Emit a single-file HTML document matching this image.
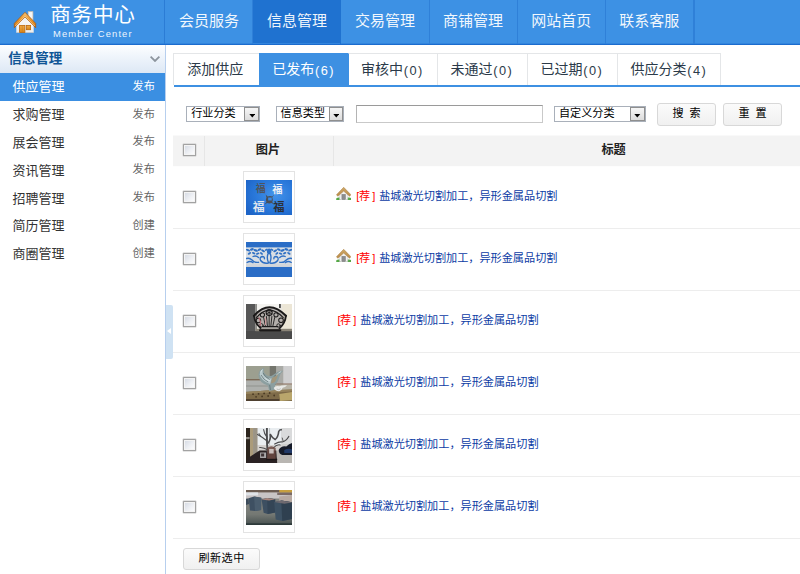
<!DOCTYPE html>
<html lang="zh-CN"><head><meta charset="utf-8"><title>商务中心 Member Center</title>
<style>
*{margin:0;padding:0;box-sizing:border-box}
html,body{width:800px;height:574px;overflow:hidden;background:#fff;font-family:"Liberation Sans","Noto Sans CJK SC",sans-serif}
i{font-style:normal;display:block}
a{display:block;text-decoration:none;color:inherit}
.cj{position:absolute;display:block;overflow:visible;white-space:nowrap;line-height:1.1;font-family:"Liberation Sans","Noto Sans CJK SC",sans-serif}
.cj .t{color:inherit;font-size:inherit;position:relative;top:-.1em}
.cj.b{font-weight:bold}
.la{position:absolute;display:block;white-space:nowrap;line-height:1.25}
#hd{position:absolute;left:0;top:0;width:800px;height:45.1px;background:linear-gradient(#3d91e4 0,#3d91e4 43.3px,#1c6dcf 43.9px,#1a6acd 100%)}
#hd .logo{position:absolute;left:0;top:0;width:165.4px;height:43.7px;border-right:1px solid #2b7cd5}
#hd .home{position:absolute;left:13.2px;top:9.8px}
#hd nav a{position:absolute;top:0;height:43.5px;border-right:1px solid #2f80d8;color:#fff}
#hd nav a.on{background:linear-gradient(#1f72d0 0,#1f72d0 43px,rgba(31,114,208,0) 43.5px);border-right-color:#1f72d0}
#hd nav .cj{opacity:.93}
#hd nav .sep{position:absolute;top:0;width:1px;height:43.7px;background:#2f80d8}
#sd{position:absolute;left:0;top:45.2px;width:165.4px;height:529px;background:#fff}
#sd:after{content:"";position:absolute;left:165px;top:0;width:1.1px;height:529px;background:#b7cfee}
#sd .sh{position:absolute;left:0;top:0;width:165px;height:27.6px;background:linear-gradient(#fdfeff 0%,#f1f6fc 35%,#dde8f5 100%)}
#sd .chev{position:absolute;left:150px;top:11.2px}
#sd .si{position:absolute;left:0;width:165px;height:27.8px}
#sd .si.on{background:#3b8fe2}
#hdl{position:absolute;left:166.1px;top:304.7px;width:7px;height:54px;background:#cfe2f3;border-radius:0 2px 2px 0}
#hdl i{position:absolute;left:1.2px;top:23.500px;width:0;height:0;border:3.600px solid transparent;border-left:0;border-right:4px solid #fff}
#mn{position:absolute;left:0;top:0;width:800px;height:574px}
#mn .tabs{position:absolute;left:0;top:53px;width:800px;height:32px}
#mn .tab{position:absolute;top:0;height:32px;border-top:1px solid #e4e6e8;border-left:1px solid #e4e6e8;color:#2b3a49}
#mn .tab:last-child{border-right:1px solid #e4e6e8}
#mn .tab.on{background:#3d90e2;border-color:#3d90e2}
#mn .tab.on + .tab{border-left-color:#3d90e2}
#mn .tabline{position:absolute;left:173.75px;top:84.6px;width:626.25px;height:2px;background:#3d90e2}
.sel{position:absolute;top:105.6px;height:16.2px;border:1px solid #a9b0ba;background:#fff;display:block}
.sel .btn{position:absolute;right:0;top:0;bottom:0;width:14.6px;border:1px solid #8f8f8f;background:linear-gradient(#f6f6f6,#dcdcdc)}
.sel .btn svg{position:absolute;left:3.2px;top:6.800px}
.inp{position:absolute;top:105.2px;height:17.4px;border:1px solid #c9c9c9;border-top-color:#9a9a9a;border-left-color:#b4b4b4;background:#fff;display:block}
.bt{position:absolute;display:block;border:1px solid #d8d8d8;border-radius:3px;background:linear-gradient(#fbfbfb,#f0f0f0)}
.th{position:absolute;left:173.4px;top:135px;width:626.6px;height:32px;background:linear-gradient(rgba(243,243,243,0) 0,#f3f3f3 1px,#f3f3f3 31px,rgba(243,243,243,0) 31.6px)}
.th .vs{position:absolute;top:1px;width:1px;height:30px;background:#e6e6e6}
.cb{position:absolute;width:12.6px;height:12.6px;border:1px solid #a2a2a2;border-radius:.5px;background:linear-gradient(135deg,#d2d8e2,#eef0f4 55%,#fff);box-shadow:inset 0 0 0 1px #f4f4f4,0 0 0 .4px #c9c9c9}
.tr{position:absolute;left:173.4px;width:626.6px;height:62.5px;border-bottom:1px solid #ededed}
.tr .pic{position:absolute;left:69.9px;top:5.0px;width:51.6px;height:51.3px;border:1px solid #e3e3e3;background:#fff;display:block}
.tr .pic svg{position:absolute;left:1.6px;top:7.3px;display:block}
.tr .hs{position:absolute;left:162.6px;top:20.4px}
</style></head>
<body>
<header id="hd">
<div class="logo">
<svg class="home" viewBox="0 0 24 24" width="24" height="24">
<defs><linearGradient id="rf" x1="0" y1="0" x2="0" y2="1"><stop offset="0" stop-color="#fac577"/><stop offset=".45" stop-color="#ee9a2e"/><stop offset="1" stop-color="#cf7410"/></linearGradient>
<linearGradient id="dr" x1="0" y1="0" x2="0" y2="1"><stop offset="0" stop-color="#f2ad48"/><stop offset="1" stop-color="#d88518"/></linearGradient>
<linearGradient id="wl" x1="0" y1="0" x2="0" y2="1"><stop offset="0" stop-color="#e4e4e4"/><stop offset=".4" stop-color="#f6f6f6"/><stop offset="1" stop-color="#ededed"/></linearGradient></defs>
<rect x="15.2" y="1.7" width="4.7" height="9" fill="#f6f6f6" stroke="#d9c3a6" stroke-width=".7"/>
<path d="M3.300 12.500 L12 4.400 L20.700 12.500 L20.700 22.500 L3.300 22.500Z" fill="url(#wl)"/>
<path d="M3.300 22.500H20.700" stroke="#c9c9c9" stroke-width=".8"/>
<rect x="6.600" y="15.400" width="5.300" height="7.100" fill="url(#dr)" stroke="#b9680f" stroke-width=".8"/>
<path d="M9.250 15.800V22.200" stroke="#c9781c" stroke-width=".5"/>
<rect x="13.300" y="15.400" width="4.300" height="4.300" fill="url(#dr)" stroke="#b9680f" stroke-width=".8"/>
<path d="M1.300 13.400 L12 2.300 L22.700 13.400 L22.700 17.700 L12 6.900 L1.300 17.700Z" fill="url(#rf)" stroke="#a9590f" stroke-width=".8" stroke-linejoin="round"/>
<path d="M2.300 16 L12 6.200 L21.700 16" fill="none" stroke="#fbdcaa" stroke-width=".7"/>
</svg>
<span class="cj" style="left:50.3px;top:5.8px;width:85.2px;height:22.66px;color:#fff;font-size:20.6px;letter-spacing:.7px"><span class="t">商务中心</span></span>
<span class="la" style="left:53px;top:27.8px;font-size:9.4px;color:#eef5fd;letter-spacing:1.12px;">Member Center</span>
</div>
<nav>
<a style="left:165.4px;width:88.04px"><span class="cj" style="left:13.6px;top:14.3px;width:60px;height:16.5px;font-size:15px"><span class="t">会员服务</span></span></a>
<a class="on" style="left:253.44px;width:88.04px"><span class="cj" style="left:13.6px;top:14.3px;width:60px;height:16.5px;font-size:15px"><span class="t">信息管理</span></span></a>
<a style="left:341.48px;width:88.04px"><span class="cj" style="left:13.6px;top:14.3px;width:60px;height:16.5px;font-size:15px"><span class="t">交易管理</span></span></a>
<a style="left:429.52px;width:88.04px"><span class="cj" style="left:13.6px;top:14.3px;width:60px;height:16.5px;font-size:15px"><span class="t">商铺管理</span></span></a>
<a style="left:517.56px;width:88.04px"><span class="cj" style="left:13.6px;top:14.3px;width:60px;height:16.5px;font-size:15px"><span class="t">网站首页</span></span></a>
<a style="left:605.6px;width:88.04px"><span class="cj" style="left:13.6px;top:14.3px;width:60px;height:16.5px;font-size:15px"><span class="t">联系客服</span></span></a>
<i class="sep" style="left:693.64px"></i>
</nav>
</header>
<aside id="sd">
<div class="sh"><span class="cj b" style="left:8.2px;top:8px;width:54.8px;height:14.85px;color:#0f5596;font-size:13.5px"><span class="t">信息管理</span></span><svg class="chev" viewBox="0 0 10 6" width="10" height="6"><path d="M.6 .7 L5 5 L9.4 .7" fill="none" stroke="#8c949d" stroke-width="1.8"/></svg></div>
<div class="si on" style="top:27.6px"><span class="cj" style="left:12.6px;top:8.7px;width:52px;height:14.3px;color:#fff;font-size:13px"><span class="t">供应管理</span></span><span class="cj" style="left:132.6px;top:8.05px;width:22.2px;height:13.31px;color:#fff;font-size:11.1px"><span class="t">发布</span></span></div>
<div class="si" style="top:55.45px"><span class="cj" style="left:12.6px;top:8.7px;width:52px;height:14.3px;color:#333;font-size:13px"><span class="t">求购管理</span></span><span class="cj" style="left:132.6px;top:8.05px;width:22.2px;height:13.31px;color:#666;font-size:11.1px"><span class="t">发布</span></span></div>
<div class="si" style="top:83.3px"><span class="cj" style="left:12.6px;top:8.7px;width:52px;height:14.3px;color:#333;font-size:13px"><span class="t">展会管理</span></span><span class="cj" style="left:132.6px;top:8.05px;width:22.2px;height:13.31px;color:#666;font-size:11.1px"><span class="t">发布</span></span></div>
<div class="si" style="top:111.15px"><span class="cj" style="left:12.6px;top:8.7px;width:52px;height:14.3px;color:#333;font-size:13px"><span class="t">资讯管理</span></span><span class="cj" style="left:132.6px;top:8.05px;width:22.2px;height:13.31px;color:#666;font-size:11.1px"><span class="t">发布</span></span></div>
<div class="si" style="top:139px"><span class="cj" style="left:12.6px;top:8.7px;width:52px;height:14.3px;color:#333;font-size:13px"><span class="t">招聘管理</span></span><span class="cj" style="left:132.6px;top:8.05px;width:22.2px;height:13.31px;color:#666;font-size:11.1px"><span class="t">发布</span></span></div>
<div class="si" style="top:166.85px"><span class="cj" style="left:12.6px;top:8.7px;width:52px;height:14.3px;color:#333;font-size:13px"><span class="t">简历管理</span></span><span class="cj" style="left:132.6px;top:8.05px;width:22.2px;height:13.31px;color:#666;font-size:11.1px"><span class="t">创建</span></span></div>
<div class="si" style="top:194.7px"><span class="cj" style="left:12.6px;top:8.7px;width:52px;height:14.3px;color:#333;font-size:13px"><span class="t">商圈管理</span></span><span class="cj" style="left:132.6px;top:8.05px;width:22.2px;height:13.31px;color:#666;font-size:11.1px"><span class="t">创建</span></span></div>
</aside>
<div id="hdl"><i></i></div>
<main id="mn">
<div class="tabs">
<a class="tab" style="left:173px;width:85.75px"><span class="cj" style="left:13.35px;top:9.2px;width:56px;height:15.4px;color:#2b3a49;font-size:14px"><span class="t">添加供应</span></span></a>
<a class="tab on" style="left:258.75px;width:88.75px"><span class="cj" style="left:12.6px;top:9.2px;width:42px;height:15.4px;color:#fff;font-size:14px"><span class="t">已发布</span></span><span class="la" style="left:55.3px;top:8.9px;font-size:12.8px;color:#fff;letter-spacing:1.35px;">(6)</span></a>
<a class="tab" style="left:347.5px;width:89.5px"><span class="cj" style="left:12.6px;top:9.2px;width:42px;height:15.4px;color:#2b3a49;font-size:14px"><span class="t">审核中</span></span><span class="la" style="left:55.3px;top:8.9px;font-size:12.8px;color:#2b3a49;letter-spacing:1.35px;">(0)</span></a>
<a class="tab" style="left:437px;width:90px"><span class="cj" style="left:12.6px;top:9.2px;width:42px;height:15.4px;color:#2b3a49;font-size:14px"><span class="t">未通过</span></span><span class="la" style="left:55.3px;top:8.9px;font-size:12.8px;color:#2b3a49;letter-spacing:1.35px;">(0)</span></a>
<a class="tab" style="left:527px;width:90px"><span class="cj" style="left:12.6px;top:9.2px;width:42px;height:15.4px;color:#2b3a49;font-size:14px"><span class="t">已过期</span></span><span class="la" style="left:55.3px;top:8.9px;font-size:12.8px;color:#2b3a49;letter-spacing:1.35px;">(0)</span></a>
<a class="tab" style="left:617px;width:103.5px"><span class="cj" style="left:12.6px;top:9.2px;width:56px;height:15.4px;color:#2b3a49;font-size:14px"><span class="t">供应分类</span></span><span class="la" style="left:69.3px;top:8.9px;font-size:12.8px;color:#2b3a49;letter-spacing:1.35px;">(4)</span></a>
</div>
<div class="tabline"></div>
<div class="flt">
<span class="sel" style="left:186.2px;width:73.9px"><span class="cj" style="left:4px;top:1.55px;width:44.4px;height:13.31px;color:#000;font-size:11.1px"><span class="t">行业分类</span></span><i class="btn"><svg viewBox="0 0 7 4" width="6.6" height="3.4"><path d="M0 0H7L3.5 4Z" fill="#000"/></svg></i></span>
<span class="sel" style="left:275.6px;width:68.6px"><span class="cj" style="left:4px;top:1.55px;width:44.4px;height:13.31px;color:#000;font-size:11.1px"><span class="t">信息类型</span></span><i class="btn"><svg viewBox="0 0 7 4" width="6.6" height="3.4"><path d="M0 0H7L3.5 4Z" fill="#000"/></svg></i></span>
<span class="inp" style="left:356px;width:186.5px"></span>
<span class="sel" style="left:554px;width:91.5px"><span class="cj" style="left:4px;top:1.55px;width:55.5px;height:13.31px;color:#000;font-size:11.1px"><span class="t">自定义分类</span></span><i class="btn"><svg viewBox="0 0 7 4" width="6.6" height="3.4"><path d="M0 0H7L3.5 4Z" fill="#000"/></svg></i></span>
<span class="bt" style="left:657.2px;top:103px;width:58.6px;height:22.5px"><span class="cj" style="left:14.2px;top:4.15px;width:11.1px;height:13.31px;color:#000;font-size:11.1px"><span class="t">搜</span></span><span class="cj" style="left:31.4px;top:4.15px;width:11.1px;height:13.31px;color:#000;font-size:11.1px"><span class="t">索</span></span></span>
<span class="bt" style="left:723.2px;top:103px;width:58.6px;height:22.5px"><span class="cj" style="left:14.2px;top:4.15px;width:11.1px;height:13.31px;color:#000;font-size:11.1px"><span class="t">重</span></span><span class="cj" style="left:31.4px;top:4.15px;width:11.1px;height:13.31px;color:#000;font-size:11.1px"><span class="t">置</span></span></span>
</div>
<div class="th"><i class="cb" style="left:9.8px;top:8.8px"></i><i class="vs" style="left:31px"></i><i class="vs" style="left:159.8px"></i><span class="cj b" style="left:82.4px;top:10.5px;width:24.8px;height:13.42px;color:#222;font-size:12.2px"><span class="t">图片</span></span><span class="cj b" style="left:428px;top:10.5px;width:24.8px;height:13.42px;color:#222;font-size:12.2px"><span class="t">标题</span></span></div>
<div class="tr" style="top:166.3px">
<i class="cb" style="left:9.8px;top:24.4px"></i>
<span class="pic"><svg viewBox="0 0 46 35" width="46.3" height="35" preserveAspectRatio="none">
<defs><radialGradient id="t1g" cx=".62" cy=".42" r=".75"><stop offset="0" stop-color="#4493ea"/><stop offset=".55" stop-color="#2a79db"/><stop offset="1" stop-color="#1d64c7"/></radialGradient></defs>
<rect width="46" height="35" fill="url(#t1g)"/>
<text x="9.8" y="11.8" font-size="9.8" font-weight="bold" font-family="&quot;Liberation Sans&quot;,&quot;Noto Sans CJK SC&quot;,sans-serif" fill="#4e5560">福</text>
<text x="26.2" y="12.6" font-size="10.2" font-weight="bold" font-family="&quot;Liberation Sans&quot;,&quot;Noto Sans CJK SC&quot;,sans-serif" fill="#e9eef5">福</text>
<text x="6.6" y="31.2" font-size="11.8" font-weight="bold" font-family="&quot;Liberation Sans&quot;,&quot;Noto Sans CJK SC&quot;,sans-serif" fill="#dfe6ee">福</text>
<text x="27" y="30.6" font-size="11.2" font-weight="bold" font-family="&quot;Liberation Sans&quot;,&quot;Noto Sans CJK SC&quot;,sans-serif" fill="#2c3038">福</text>
<path d="M19.5 14.5 l2 2 l2.3 -.6 l2.3 .6 l2 -2 l-2 3 l.6 2.3 l-.6 2.3 l2 2.6 l-2.6 -1.8 l-2.3 .6 l-2.3 -.6 l-2.6 1.8 l2 -2.6 l-.6 -2.3 l.6 -2.3 z M22 17.6 v3 h3.6 v-3z" fill="#4a4f58" fill-rule="evenodd"/>
</svg></span>
<svg class="hs" viewBox="0 0 16 14" width="15.4" height="13.3">
<defs><linearGradient id="hr0" x1="0" y1="0" x2="0" y2="1"><stop offset="0" stop-color="#cfa968"/><stop offset="1" stop-color="#b98a48"/></linearGradient></defs>
<path d="M0 12.600 Q0 11 2.400 11 H5 V13.800 H1 Q0 13.800 0 12.600Z M16 12.600 Q16 11 13.600 11 H11 V13.800 H15 Q16 13.800 16 12.600Z" fill="#55a846"/>
<path d="M3.700 7 L8 2.500 L12.300 7 V13.300 H3.700Z" fill="#f2f2f2" stroke="#bdbdbd" stroke-width=".5"/>
<rect x="6.100" y="7.700" width="3.800" height="5.600" fill="#8d8d8d" stroke="#6f6f6f" stroke-width=".4"/>
<path d="M.4 8.1 L8 .3 L15.6 8.1 L14.2 9.8 L8 4.300 L1.8 9.8Z" fill="url(#hr0)" stroke="#a67a3c" stroke-width=".5" stroke-linejoin="round"/>
</svg>
<span class="la" style="left:182.9px;top:23.9px;font-size:11.1px;color:#f00;">[</span><span class="cj" style="left:185.6px;top:25.05px;width:11.1px;height:13.31px;color:#f00;font-size:11.1px"><span class="t">荐</span></span><span class="la" style="left:198.8px;top:23.9px;font-size:11.1px;color:#f00;">]</span>
<span class="cj" style="left:205.8px;top:25.05px;width:178.4px;height:13.37px;color:#0b3ba4;font-size:11.15px"><span class="t">盐城激光切割加工，异形金属品切割</span></span>
</div>
<div class="tr" style="top:228.3px">
<i class="cb" style="left:9.8px;top:24.4px"></i>
<span class="pic"><svg viewBox="0 0 46 35" width="46.3" height="35" preserveAspectRatio="none">
<rect width="46" height="35" fill="#2a6dc6"/>
<rect y="5.400" width="46" height="19.400" fill="#dadfe4"/>
<rect y="21.600" width="46" height="3.200" fill="#d2d6da"/>
<g fill="#2f70c4"><ellipse cx="2.0" cy="8.2" rx="2.2" ry="1.0" transform="rotate(25 2.0 8.2)"/><ellipse cx="44.0" cy="8.2" rx="2.2" ry="1.0" transform="rotate(-25 44.0 8.2)"/><ellipse cx="5.8" cy="7.4" rx="2.0" ry="1.1" transform="rotate(-20 5.8 7.4)"/><ellipse cx="40.2" cy="7.4" rx="2.0" ry="1.1" transform="rotate(20 40.2 7.4)"/><ellipse cx="9.6" cy="8.4" rx="2.3" ry="1.1" transform="rotate(20 9.6 8.4)"/><ellipse cx="36.4" cy="8.4" rx="2.3" ry="1.1" transform="rotate(-20 36.4 8.4)"/><ellipse cx="13.4" cy="7.6" rx="2.0" ry="1.1" transform="rotate(-25 13.4 7.6)"/><ellipse cx="32.6" cy="7.6" rx="2.0" ry="1.1" transform="rotate(25 32.6 7.6)"/><ellipse cx="17.0" cy="8.8" rx="2.1" ry="1.0" transform="rotate(30 17.0 8.8)"/><ellipse cx="29.0" cy="8.8" rx="2.1" ry="1.0" transform="rotate(-30 29.0 8.8)"/><ellipse cx="20.2" cy="7.8" rx="1.6" ry="0.9" transform="rotate(-30 20.2 7.8)"/><ellipse cx="25.8" cy="7.8" rx="1.6" ry="0.9" transform="rotate(30 25.8 7.8)"/><ellipse cx="3.4" cy="11.4" rx="1.9" ry="0.9" transform="rotate(-30 3.4 11.4)"/><ellipse cx="42.6" cy="11.4" rx="1.9" ry="0.9" transform="rotate(30 42.6 11.4)"/><ellipse cx="7.6" cy="11.2" rx="1.8" ry="1.0" transform="rotate(30 7.6 11.2)"/><ellipse cx="38.4" cy="11.2" rx="1.8" ry="1.0" transform="rotate(-30 38.4 11.2)"/><ellipse cx="11.6" cy="11.6" rx="1.9" ry="0.9" transform="rotate(-20 11.6 11.6)"/><ellipse cx="34.4" cy="11.6" rx="1.9" ry="0.9" transform="rotate(20 34.4 11.6)"/><ellipse cx="15.4" cy="11.4" rx="1.7" ry="0.9" transform="rotate(35 15.4 11.4)"/><ellipse cx="30.6" cy="11.4" rx="1.7" ry="0.9" transform="rotate(-35 30.6 11.4)"/><ellipse cx="23" cy="9.6" rx="2.2" ry="3"/></g>
<g fill="none" stroke="#2f70c4" stroke-width="1.35" stroke-linecap="round">
<path d="M22.300 21 Q17 22 14.500 18.500 Q13 15.500 16 14.500 Q18.500 14.400 18.300 16.800"/>
<path d="M23.700 21 Q29 22 31.500 18.500 Q33 15.500 30 14.500 Q27.500 14.400 27.700 16.800"/>
<path d="M12.500 20.300 Q8.500 21 6 18 Q3.500 15.500 .5 16.500"/><path d="M33.500 20.300 Q37.500 21 40 18 Q42.500 15.500 45.500 16.500"/>
<path d="M1 20.500 Q4 18.500 7 20.600"/><path d="M45 20.500 Q42 18.500 39 20.600"/>
<path d="M21.600 12.500 Q20.500 17 22.300 20.500"/><path d="M24.400 12.500 Q25.500 17 23.700 20.500"/>
<path d="M7 14.500 Q10 13 12.500 15.500"/><path d="M39 14.500 Q36 13 33.500 15.500"/>
</g>
</svg></span>
<svg class="hs" viewBox="0 0 16 14" width="15.4" height="13.3">
<defs><linearGradient id="hr1" x1="0" y1="0" x2="0" y2="1"><stop offset="0" stop-color="#cfa968"/><stop offset="1" stop-color="#b98a48"/></linearGradient></defs>
<path d="M0 12.600 Q0 11 2.400 11 H5 V13.800 H1 Q0 13.800 0 12.600Z M16 12.600 Q16 11 13.600 11 H11 V13.800 H15 Q16 13.800 16 12.600Z" fill="#55a846"/>
<path d="M3.700 7 L8 2.500 L12.300 7 V13.300 H3.700Z" fill="#f2f2f2" stroke="#bdbdbd" stroke-width=".5"/>
<rect x="6.100" y="7.700" width="3.800" height="5.600" fill="#8d8d8d" stroke="#6f6f6f" stroke-width=".4"/>
<path d="M.4 8.1 L8 .3 L15.6 8.1 L14.2 9.8 L8 4.300 L1.8 9.8Z" fill="url(#hr1)" stroke="#a67a3c" stroke-width=".5" stroke-linejoin="round"/>
</svg>
<span class="la" style="left:182.9px;top:23.9px;font-size:11.1px;color:#f00;">[</span><span class="cj" style="left:185.6px;top:25.05px;width:11.1px;height:13.31px;color:#f00;font-size:11.1px"><span class="t">荐</span></span><span class="la" style="left:198.8px;top:23.9px;font-size:11.1px;color:#f00;">]</span>
<span class="cj" style="left:205.8px;top:25.05px;width:178.4px;height:13.37px;color:#0b3ba4;font-size:11.15px"><span class="t">盐城激光切割加工，异形金属品切割</span></span>
</div>
<div class="tr" style="top:290.3px">
<i class="cb" style="left:9.8px;top:24.4px"></i>
<span class="pic"><svg viewBox="0 0 46 35" width="46.3" height="35" preserveAspectRatio="none">
<rect width="46" height="35" fill="#e9e6df"/>
<rect x="11" y="0" width="22" height="7" fill="#f4f3f0"/>
<rect x="36" y="0" width="10" height="27" fill="#ece6d6"/>
<rect x="0" y="0" width="9.4" height="35" fill="#575757"/>
<rect x="9.4" y="0" width="1.5" height="27" fill="#8a8a88"/>
<rect x="32.800" y="0" width="1.800" height="4" fill="#4c4c4c"/>
<rect x="0" y="27" width="46" height="8" fill="#4a4a4a"/>
<rect x="9.4" y="24.800" width="36.600" height="2.400" fill="#8b8578"/>
<path d="M7.900 11.800 Q23 -5.400 39.700 11.800 Q38.500 20 33 26.500 H15 Q9 20 7.900 11.800Z" fill="#5b5353" fill-opacity=".38"/>
<g fill="none" stroke="#1b1919" stroke-linecap="round" stroke-linejoin="round">
<path d="M7.900 11.800 Q23 -5.400 39.700 11.800" stroke-width="2"/>
<path d="M10.500 13.600 Q23 -1.400 37 13.600" stroke-width="1.100"/>
<path d="M7.900 11.800 Q8.500 19 14.500 24" stroke-width="1.700"/><path d="M39.700 11.800 Q39 19 33.200 24.500" stroke-width="1.700"/>
<path d="M14 26.300 H34" stroke-width="2.200"/><path d="M16.500 22.600 H31.500" stroke-width="1.400"/>
<path d="M23 12 V22 M20.300 12.500 L21.300 22 M25.700 12.500 L24.700 22 M17.500 13.500 L19.300 22 M28.500 13.500 L26.700 22" stroke-width=".9"/>
<circle cx="23" cy="8.600" r="3" stroke-width="1.100"/><path d="M23 5.600 V11.600 M20.200 7.200 L25.800 10 M25.800 7.200 L20.200 10" stroke-width=".8"/>
<circle cx="16.300" cy="10.800" r="2.100" stroke-width="1"/><circle cx="29.800" cy="10.800" r="2.100" stroke-width="1"/>
<circle cx="12.300" cy="16.500" r="2.300" stroke-width="1"/><circle cx="34.800" cy="16.300" r="2.300" stroke-width="1"/>
<circle cx="15.300" cy="21.300" r="1.700" stroke-width=".9"/><circle cx="32.300" cy="21.500" r="1.700" stroke-width=".9"/>
</g>
<path d="M12.600 13.500 q2.800 4 1.200 8.500" stroke="#c0727c" stroke-width="1.200" fill="none"/><path d="M19.200 13.500 q1.200 4 0 7.500" stroke="#d49a9c" stroke-width="1" fill="none"/>
</svg></span>
<span class="la" style="left:164px;top:23.9px;font-size:11.1px;color:#f00;">[</span><span class="cj" style="left:166.7px;top:25.05px;width:11.1px;height:13.31px;color:#f00;font-size:11.1px"><span class="t">荐</span></span><span class="la" style="left:179.9px;top:23.9px;font-size:11.1px;color:#f00;">]</span>
<span class="cj" style="left:186.9px;top:25.05px;width:178.4px;height:13.37px;color:#0b3ba4;font-size:11.15px"><span class="t">盐城激光切割加工，异形金属品切割</span></span>
</div>
<div class="tr" style="top:352.3px">
<i class="cb" style="left:9.8px;top:24.4px"></i>
<span class="pic"><svg viewBox="0 0 46 35" width="46.3" height="35" preserveAspectRatio="none">
<rect width="46" height="35" fill="#a3a59a"/>
<rect x="0" y="0" width="23" height="13" fill="#9c9f90"/>
<rect x="23.500" y="0" width="6.500" height="20" fill="#74756d"/>
<rect x="30" y="0" width="7" height="20" fill="#a9aaa6"/>
<rect x="37" y="0" width="9" height="19" fill="#cfcfd0"/>
<rect x="0" y="13" width="24" height="1.600" fill="#7b6a58"/>
<rect x="0" y="14.600" width="26" height="10.400" fill="#aeb0ad"/>
<rect x="0" y="19.500" width="22" height="1" fill="#8f918e"/>
<rect x="30" y="17.500" width="16" height="1.200" fill="#8a6f5c"/>
<rect x="28" y="18.700" width="18" height="7" fill="#b7b3a6"/>
<path d="M0 26 L20 24.500 L46 23.500 V35 H0Z" fill="#7e6b49"/>
<path d="M0 26 L20 24.500 L46 23.500 V25.500 L0 28Z" fill="#96835d"/>
<path d="M33 28 L46 26 V34 L34 35Z" fill="#b9a66c"/>
<path d="M0 33 H33 V35 H0Z" fill="#4f4030"/>
<g fill="#4a3a24"><circle cx="7" cy="28.200" r=".9"/><circle cx="12.500" cy="27.800" r=".9"/><circle cx="18" cy="27.400" r=".9"/><circle cx="23.500" cy="27" r=".9"/><circle cx="10" cy="30.800" r=".9"/><circle cx="16" cy="30.400" r=".9"/><circle cx="22" cy="30" r=".9"/><circle cx="28" cy="29.500" r=".9"/></g>
<path d="M12.300 9 Q12.500 3 18.300 2 Q16.500 5.500 19.500 8.500 Q23 11 26 9.500 Q29.500 7.500 31.500 5.800 Q34.500 4.300 37 4.800 Q33.800 7.500 33 11.500 Q32 16 29 18.500 L28.500 24 L23 25 L21.800 19.500 Q13 17 12.300 9Z" fill="#8c9fa0"/>
<path d="M13.600 8.500 Q14.200 4.300 17 3.200 Q15.500 6.500 18 9.800 Q21.500 13.200 25.500 12.300 L24 18 Q15 14.800 13.600 8.500Z" fill="#b9c9cc"/>
<path d="M26 12 Q29.500 11 32 7.500 Q31 12 29 15.500 Q27 17.500 24.800 17.200Z" fill="#a3967b"/>
<path d="M15 9 q2 4.500 7 7 M17 7 q1.500 4 6.500 6.500 M27.500 10.500 q2.500 -1 4.500 -4 M23.500 19 l.8 5" stroke="#5f6f70" stroke-width=".7" fill="none"/>
<path d="M14.500 6.500 q.5 -2 2 -3 M19 12.500 q2.500 2 5 2.300 M30 9 q2.500 -2.500 5 -3.500" stroke="#dfe8ea" stroke-width=".7" fill="none"/>
<path d="M27.500 22 Q29 19.500 33 20.300 Q36 19 40.800 19.300 Q39 21.300 36.500 21.800 Q35.500 24.500 33 25.300 Q29.500 25.500 27.500 22Z" fill="#e8e9e6"/>
<path d="M30.500 23 q2 1.500 4 -.3" stroke="#9b9d98" stroke-width=".6" fill="none"/>
</svg></span>
<span class="la" style="left:164px;top:23.9px;font-size:11.1px;color:#f00;">[</span><span class="cj" style="left:166.7px;top:25.05px;width:11.1px;height:13.31px;color:#f00;font-size:11.1px"><span class="t">荐</span></span><span class="la" style="left:179.9px;top:23.9px;font-size:11.1px;color:#f00;">]</span>
<span class="cj" style="left:186.9px;top:25.05px;width:178.4px;height:13.37px;color:#0b3ba4;font-size:11.15px"><span class="t">盐城激光切割加工，异形金属品切割</span></span>
</div>
<div class="tr" style="top:414.3px">
<i class="cb" style="left:9.8px;top:24.4px"></i>
<span class="pic"><svg viewBox="0 0 46 35" width="46.3" height="35" preserveAspectRatio="none">
<rect width="46" height="35" fill="#cfcfce"/>
<rect x="0" y="0" width="4" height="35" fill="#2b241c"/>
<rect x="0" y="9" width="3.600" height="2.200" fill="#8f8b84"/>
<rect x="4" y="0" width="3" height="35" fill="#ab9b7a"/>
<rect x="7" y="0" width="4.600" height="35" fill="#9b9486"/>
<rect x="11.600" y="0" width="23.400" height="17" fill="#e9edf0"/>
<rect x="11.600" y="17" width="23.400" height="6" fill="#d5d2d0"/>
<rect x="23" y="0" width=".9" height="17" fill="#b9bcbe"/>
<rect x="35" y="0" width="11" height="16" fill="#d9dadb"/>
<path d="M7 27 L14 22.500 H36 L46 24 V35 H7Z" fill="#b9b6b2"/>
<path d="M0 35 L2 30 L13.500 22.500 H30 L31 35Z" fill="#2a2223"/>
<path d="M32.500 22 Q35 17.500 40 18.500 Q43 15.500 46 15 V27 H36 Q32.500 26 32.500 22Z" fill="#161b29"/>
<path d="M38 22 Q42 20 46 21.500 V25 H38Z" fill="#223a68"/>
<rect x="14" y="24.500" width="6" height="5.500" fill="#a9a7a8"/><rect x="15" y="25.500" width="3" height="3" fill="#3d3334"/>
<g fill="none" stroke="#4b4b4d" stroke-linecap="round">
<path d="M21.500 24 Q20.500 14 20.800 .5" stroke-width="1.900"/><path d="M20.800 9 Q18 6 17.500 1.500" stroke-width="1.100"/><path d="M22 22 Q17 19 13.500 19.500" stroke-width="1"/>
<path d="M21 13 Q16 9 11.500 6.500" stroke-width="1.200"/><path d="M14.500 8.200 L13 5.500" stroke-width=".9"/>
<path d="M22 15 Q25 11 24 6 Q26 10 29 11.500 Q32 9 32.500 3.500 Q33.500 1.500 35 1.800" stroke-width="1.600"/>
<path d="M28.500 16 Q33 13.500 36 14 Q40 13 42.500 8.500" stroke-width="1.200"/><path d="M37 13.500 L36 10" stroke-width=".9"/>
<path d="M27 20 Q31 16 34 17" stroke-width="1"/>
</g>
<path d="M21 31 V20 Q25 16.500 29.500 20 V31Z" fill="#6b4a43" fill-opacity=".85"/>
<path d="M23 21 h4.500 v4.500 h-4.500z" fill="#c9bfbd"/>
<path d="M20 31.500 H31" stroke="#1b1516" stroke-width="1.400"/>
</svg></span>
<span class="la" style="left:164px;top:23.9px;font-size:11.1px;color:#f00;">[</span><span class="cj" style="left:166.7px;top:25.05px;width:11.1px;height:13.31px;color:#f00;font-size:11.1px"><span class="t">荐</span></span><span class="la" style="left:179.9px;top:23.9px;font-size:11.1px;color:#f00;">]</span>
<span class="cj" style="left:186.9px;top:25.05px;width:178.4px;height:13.37px;color:#0b3ba4;font-size:11.15px"><span class="t">盐城激光切割加工，异形金属品切割</span></span>
</div>
<div class="tr" style="top:476.3px">
<i class="cb" style="left:9.8px;top:24.4px"></i>
<span class="pic"><svg viewBox="0 0 46 35" width="46.3" height="35" preserveAspectRatio="none">
<defs><linearGradient id="t6g" x1="0" y1="0" x2="0" y2="1"><stop offset="0" stop-color="#908f8b"/><stop offset=".7" stop-color="#747873"/><stop offset="1" stop-color="#465050"/></linearGradient></defs>
<rect width="46" height="35" fill="url(#t6g)"/>
<rect width="46" height="8.500" fill="#c8c4c5"/>
<rect width="46" height="2.400" fill="#6b5c52"/>
<rect x="33" y="0" width="13" height="2.600" fill="#c79f3f"/>
<rect x="31" y="2.600" width="15" height="2.400" fill="#7b6a66"/>
<rect x="0" y="2.400" width="12" height="3" fill="#dfe3e8"/>
<path d="M33 6.500 L46 5 V12 H33Z" fill="#b7a9a2"/>
<path d="M2.500 8.200 L8 6.600 L15.200 7.800 L15 20 L9 21 L4 20.400Z" fill="#3e5062"/>
<path d="M8 6.600 L15.200 7.800 L15 20 L9 21Z" fill="#4a5d6e"/>
<path d="M15.500 9.400 L21 8 L29 9.200 L29 22.500 L21.500 24 L17.500 22.800Z" fill="#3d4f61"/>
<path d="M21 8 L29 9.200 L29 22.500 L21.500 24Z" fill="#344556"/>
<path d="M15.500 9.400 L21 8 L29 9.200 L23 10.600Z" fill="#a8857c"/>
<path d="M28 12 L35 10.600 L46 12.400 V29 L36 31 L29.500 29.500Z" fill="#3d5163"/>
<path d="M35 10.600 L46 12.400 V29 L36 31Z" fill="#2f4050"/>
<path d="M28 12 L35 10.600 L46 12.400 L38 13.800Z" fill="#6f6a70"/>
<path d="M0 9 L2.500 8.500 L3 14 L0 15Z" fill="#3c4b5a"/>
<rect y="33.300" width="46" height="1.700" fill="#2d3a3a"/>
</svg></span>
<span class="la" style="left:164px;top:23.9px;font-size:11.1px;color:#f00;">[</span><span class="cj" style="left:166.7px;top:25.05px;width:11.1px;height:13.31px;color:#f00;font-size:11.1px"><span class="t">荐</span></span><span class="la" style="left:179.9px;top:23.9px;font-size:11.1px;color:#f00;">]</span>
<span class="cj" style="left:186.9px;top:25.05px;width:178.4px;height:13.37px;color:#0b3ba4;font-size:11.15px"><span class="t">盐城激光切割加工，异形金属品切割</span></span>
</div>
<span class="bt" style="left:183px;top:548px;width:77px;height:22px"><span class="cj" style="left:14.4px;top:3.75px;width:46.4px;height:13.31px;color:#000;font-size:11.1px;letter-spacing:.5px"><span class="t">刷新选中</span></span></span>
</main>
</body></html>
